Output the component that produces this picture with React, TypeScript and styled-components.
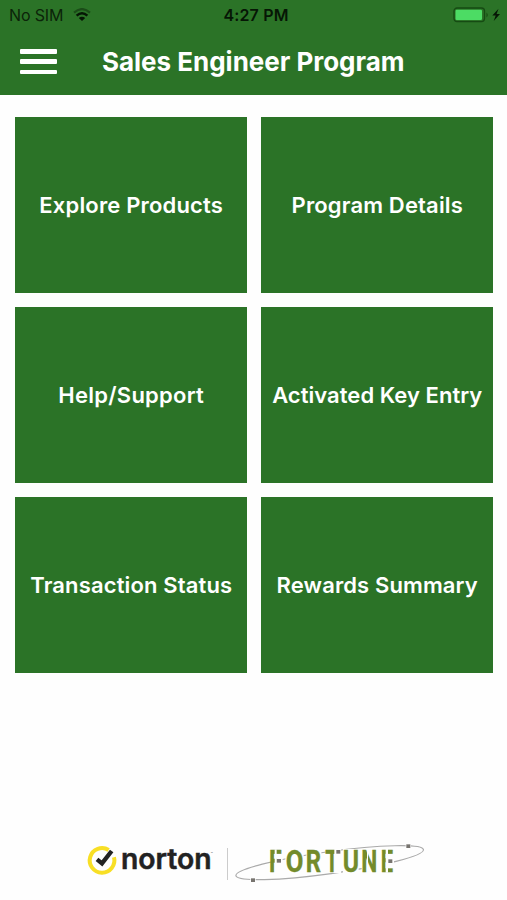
import React from "react";
import styled, { createGlobalStyle } from "styled-components";

const green = "#2b7327";

const GlobalStyle = createGlobalStyle`
  * { box-sizing: border-box; }
  body { margin: 0; background: #fff; font-family: Inter, sans-serif; }
`;

const Screen = styled.div`
  width: 507px;
  height: 900px;
  display: flex;
  flex-direction: column;
  background: #fefefe;
  overflow: hidden;
`;

const StatusBar = styled.div`
  height: 30px;
  flex: none;
  display: grid;
  grid-template-columns: 1fr auto 1fr;
  align-items: center;
  padding: 0 6px 0 9px;
  background: ${green};
  color: #0b2409;
  font-size: 16px;
  line-height: 30px;
`;

const Carrier = styled.div`
  display: flex;
  align-items: center;
  gap: 10px;
  letter-spacing: -0.15px;
`;

const Clock = styled.div`
  font-weight: 600;
  margin-left: 2px;
  color: #061605;
  letter-spacing: 0.15px;
`;

const Power = styled.div`
  display: flex;
  justify-content: flex-end;
`;

const Header = styled.header`
  height: 65px;
  flex: none;
  display: flex;
  align-items: center;
  padding: 0 20px 2px;
  gap: 45px;
  background: ${green};
`;

const MenuButton = styled.button`
  width: 37px;
  height: 25px;
  padding: 0;
  border: 0;
  background: none;
  display: flex;
  flex-direction: column;
  justify-content: space-between;
`;

const MenuLine = styled.span`
  height: 4.5px;
  width: 37px;
  background: #fff;
  border-radius: 1px;
`;

const Title = styled.h1`
  margin: 0;
  color: #fff;
  font-size: 26px;
  font-weight: 700;
  line-height: 32px;
  letter-spacing: -0.02px;
  white-space: nowrap;
`;

const Tiles = styled.main`
  display: grid;
  grid-template-columns: 1fr 1fr;
  grid-auto-rows: 176px;
  gap: 14px 13.5px;
  padding: 22px 14px 0 14.5px;
`;

const Tile = styled.button<{ $track: number }>`
  border: 0;
  padding: 0 0 0 1px;
  background: ${green};
  color: #fff;
  font: 600 22px/28px Inter, sans-serif;
  letter-spacing: ${(p) => p.$track}px;
  white-space: nowrap;
`;

const Footer = styled.footer`
  margin-top: auto;
  height: 65px;
  display: flex;
  align-items: flex-start;
  padding-left: 75px;
`;

const Divider = styled.div`
  width: 1px;
  height: 32px;
  margin: 13px -3px 0 -8px;
  background: #ccc;
`;

const tiles = [
  { label: "Explore Products", track: 0.17 },
  { label: "Program Details", track: 0.15 },
  { label: "Help/Support", track: 0.25 },
  { label: "Activated Key Entry", track: 0.04 },
  { label: "Transaction Status", track: 0.14 },
  { label: "Rewards Summary", track: 0.12 },
];

const Wifi = () => (
  <svg width="18" height="14" viewBox="0 0 18 14" fill="none">
    <path d="M1 4.6Q9-2.4 17 4.6" stroke="#1b4c18" strokeWidth="2.2" />
    <path d="M3.6 7.6Q9 3 14.4 7.6" stroke="#061605" strokeWidth="2.5" />
    <path d="M5.8 10Q9 7.4 12.2 10L9 13Z" fill="#061605" />
  </svg>
);

const Battery = () => (
  <svg width="48" height="18" viewBox="0 0 48 18">
    <rect x="1" y="2" width="30.5" height="13.6" rx="3" fill="#2b7327" stroke="#164b13" strokeWidth="1.3" />
    <rect x="2.5" y="3.7" width="26.5" height="10.3" rx="1.2" fill="#4cdc64" />
    <path d="M33.5 6.5Q36 9 33.5 11.5Z" fill="#164b13" />
    <path d="M45.5 2.8L39.3 9.6H42.7L40.7 15L47 8H43.6Z" fill="#061605" />
  </svg>
);

const NortonLogo = () => (
  <svg width="160" height="55" viewBox="0 0 480 165">
    <path d="M101 45A37 37 0 1 0 117 67" fill="none" stroke="#f8df25" strokeWidth="12" />
    <path d="M66 73L81 85L110 48" fill="none" stroke="#222" strokeWidth="13" />
    <text x="138" y="102" textLength="272" lengthAdjust="spacingAndGlyphs" fontFamily="Inter, sans-serif" fontSize="84" fontWeight="600" fill="#222" stroke="#222" strokeWidth="1.5">norton</text>
    <text x="407" y="61" fontFamily="Inter, sans-serif" fontSize="10" fill="#555">™</text>
  </svg>
);

const letters = [
  { ch: "F", x: 132, w: 38 },
  { ch: "O", x: 182, w: 53 },
  { ch: "R", x: 242, w: 46 },
  { ch: "T", x: 301, w: 40 },
  { ch: "U", x: 353, w: 49 },
  { ch: "N", x: 409, w: 48 },
  { ch: "E", x: 467, w: 37 },
];

const FortuneLogo = () => (
  <svg width="210" height="55" viewBox="0 0 630 165">
    <ellipse cx="314" cy="83" rx="284" ry="33" transform="rotate(-7.9 314 83)" fill="none" stroke="#aaa" strokeWidth="3.5" />
    <g fill="#fefefe">
      <rect x="181" y="42" width="55" height="72" />
      <rect x="244" y="42" width="45" height="72" />
      <rect x="302" y="42" width="46" height="72" />
      <rect x="354" y="42" width="47" height="72" />
      <rect x="410" y="42" width="97" height="72" />
    </g>
    <g fontFamily="Roboto, sans-serif" fontSize="92" fontWeight="700" fill="#738b2b" stroke="#738b2b" strokeWidth="1">
      {letters.map((l) => (
        <text key={l.ch} x={l.x} y="111" textLength={l.w} lengthAdjust="spacingAndGlyphs">{l.ch}</text>
      ))}
    </g>
    <g fill="#fefefe">
      <rect x="149" y="43" width="6" height="70" />
      <rect x="155" y="57" width="18" height="34" />
      <rect x="155" y="91" width="18" height="10" />
      <rect x="328" y="42" width="20" height="20" />
      <rect x="426" y="42" width="3" height="71" />
      <rect x="482" y="42" width="7" height="71" />
      <rect x="489" y="57" width="18" height="42" />
    </g>
    <g fill="#77746f">
      <rect x="156" y="72" width="12" height="11" />
      <rect x="334" y="45" width="12" height="11" />
      <rect x="490" y="73" width="12" height="11" />
      <rect x="78" y="130" width="12" height="11" stroke="#fefefe" strokeWidth="4" paintOrder="stroke" />
      <rect x="544" y="28" width="12" height="11" stroke="#fefefe" strokeWidth="4" paintOrder="stroke" />
    </g>
  </svg>
);

export default function App() {
  return (
    <>
      <GlobalStyle />
      <Screen>
        <StatusBar>
          <Carrier>No SIM <Wifi /></Carrier>
          <Clock>4:27 PM</Clock>
          <Power><Battery /></Power>
        </StatusBar>
        <Header>
          <MenuButton aria-label="Menu">
            <MenuLine /><MenuLine /><MenuLine />
          </MenuButton>
          <Title>Sales Engineer Program</Title>
        </Header>
        <Tiles>
          {tiles.map((t) => (
            <Tile key={t.label} $track={t.track}>{t.label}</Tile>
          ))}
        </Tiles>
        <Footer>
          <NortonLogo />
          <Divider />
          <FortuneLogo />
        </Footer>
      </Screen>
    </>
  );
}
